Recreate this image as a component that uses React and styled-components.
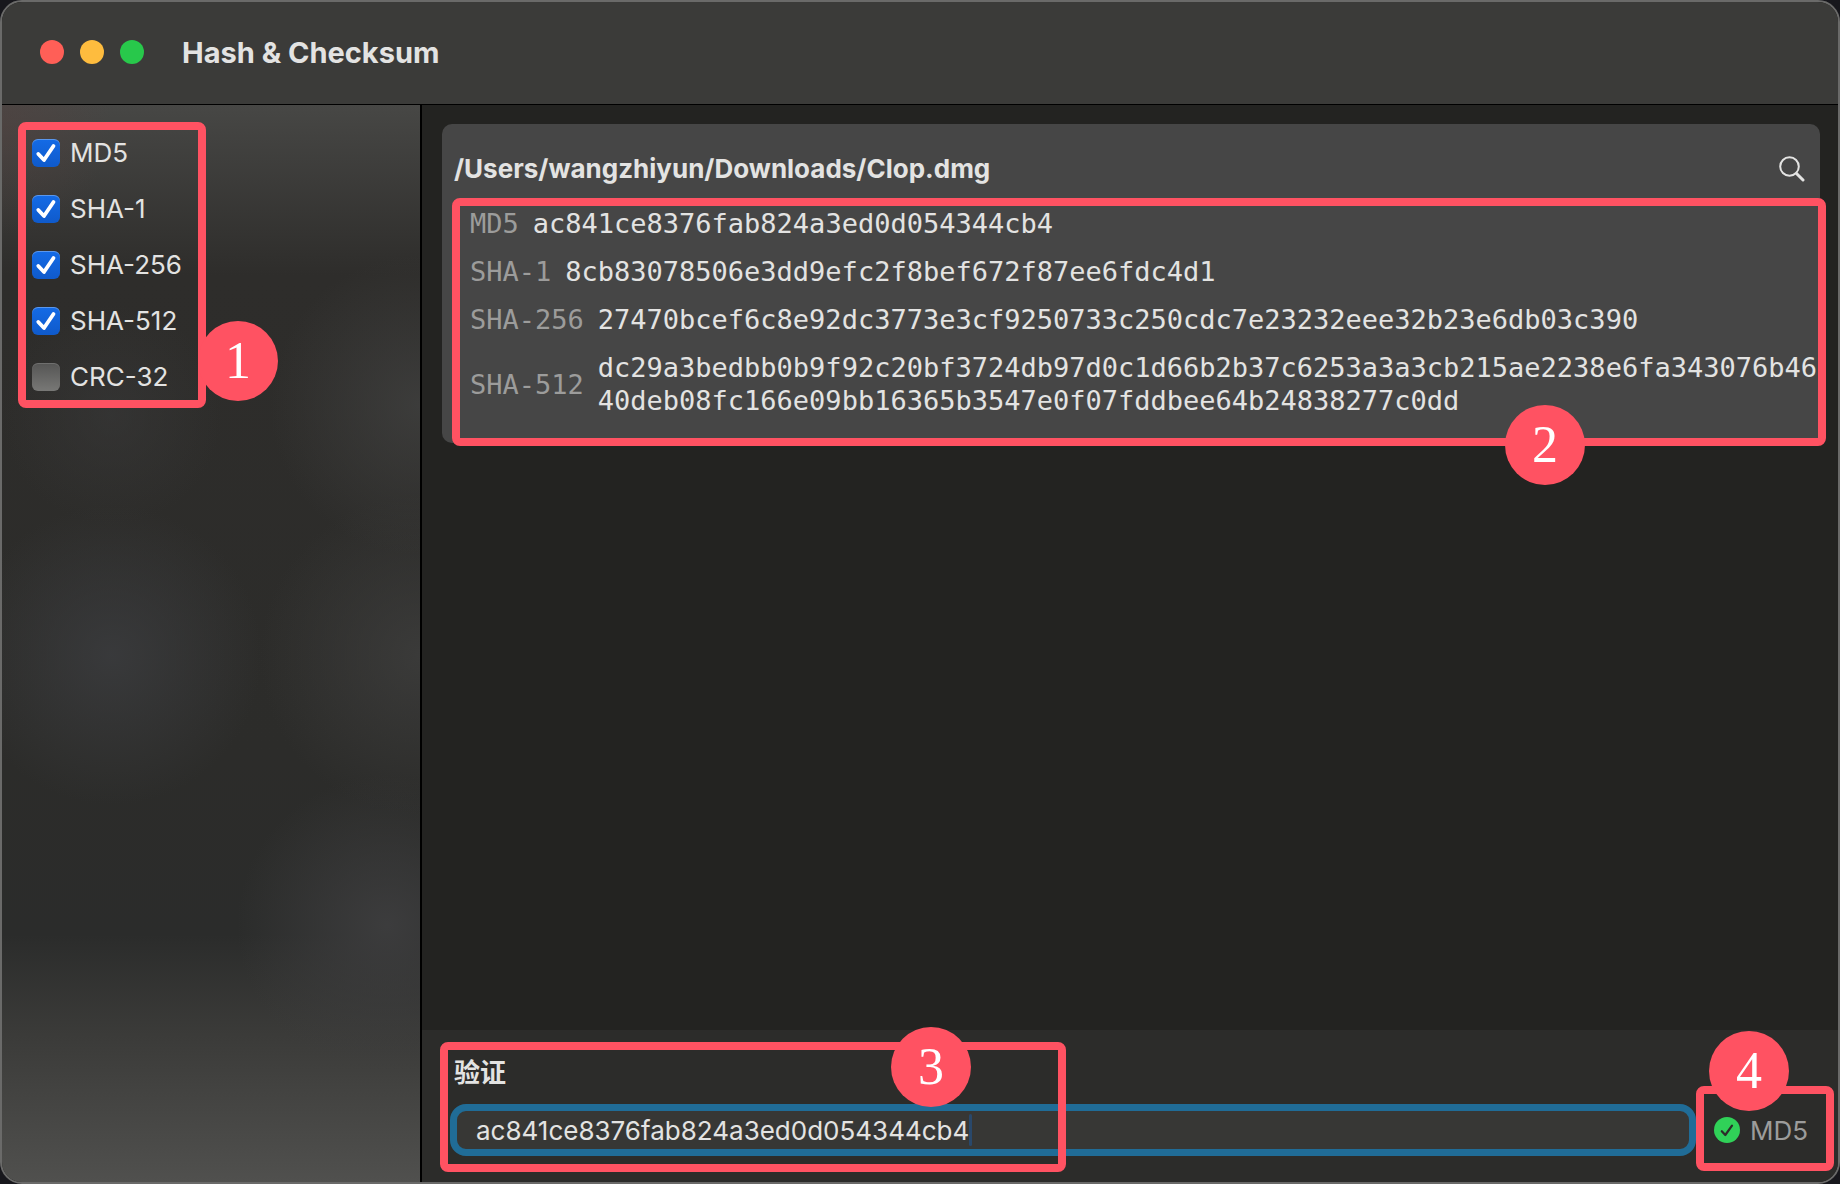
import React, { useState } from 'react'
import styled, { createGlobalStyle } from 'styled-components'

const ACCENT = '#ff5262'
const TEXT = '#e3e3e2'
const MUTED = '#9c9c9b'
const UI_FONT = "Inter, 'Noto Sans CJK SC', sans-serif"
const MONO_FONT = "'DejaVu Sans Mono', monospace"

const ALGORITHMS = [
  { name: 'MD5', checked: true },
  { name: 'SHA-1', checked: true },
  { name: 'SHA-256', checked: true },
  { name: 'SHA-512', checked: true },
  { name: 'CRC-32', checked: false },
]

const HASHES = [
  { name: 'MD5', value: 'ac841ce8376fab824a3ed0d054344cb4' },
  { name: 'SHA-1', value: '8cb83078506e3dd9efc2f8bef672f87ee6fdc4d1' },
  {
    name: 'SHA-256',
    value: '27470bcef6c8e92dc3773e3cf9250733c250cdc7e23232eee32b23e6db03c390',
  },
  {
    name: 'SHA-512',
    value:
      'dc29a3bedbb0b9f92c20bf3724db97d0c1d66b2b37c6253a3a3cb215ae2238e6fa343076b4640deb08fc166e09bb16365b3547e0f07fddbee64b24838277c0dd',
  },
]

const GlobalStyle = createGlobalStyle`
  * {
    box-sizing: border-box;
  }

  body {
    margin: 0;
    background: #17171c;
    color: ${TEXT};
    font-family: ${UI_FONT};
    font-size: 26px;
    line-height: 33px;
  }
`

const Window = styled.div`
  display: flex;
  flex-direction: column;
  min-height: 100vh;
  border: 2px solid #6a6a69;
  border-radius: 22px;
  background: #232321;
  overflow: hidden;
`

const TitleBar = styled.header`
  display: flex;
  align-items: center;
  gap: 16px;
  height: 103px;
  padding: 0 38px 2px;
  border-bottom: 1px solid #000;
  background: #3b3b39;
`

const Light = styled.button`
  width: 24px;
  height: 24px;
  padding: 0;
  border: 0;
  border-radius: 50%;
  background: ${({ $color }) => $color};
`

const Title = styled.h1`
  margin: 0 0 0 22px;
  font-size: 29px;
  font-weight: 700;
`

const Body = styled.div`
  display: flex;
  flex: 1;
`

const Sidebar = styled.aside`
  flex: none;
  width: 420px;
  padding: 31px 30px;
  border-right: 2px solid #000;
  background:
    radial-gradient(circle at 0 20px, rgba(84, 66, 64, 0.5), transparent 110px),
    radial-gradient(circle at 100% 300px, rgba(64, 64, 63, 0.8), transparent 150px),
    radial-gradient(circle at 110px 310px, rgba(56, 56, 56, 0.6), transparent 110px),
    radial-gradient(circle at 110px 550px, rgba(58, 59, 61, 0.9), transparent 150px),
    radial-gradient(circle at 100% 550px, rgba(60, 60, 59, 0.9), transparent 160px),
    radial-gradient(circle at 385px 820px, rgba(62, 62, 63, 0.9), transparent 150px),
    linear-gradient(#474745, #2e2d2b 170px, #2c2c2a 650px, #2b2c2b 830px, #3b3b39 930px, #50504e);
`

const AlgorithmList = styled.div`
  position: relative;
  display: flex;
  flex-direction: column;
  align-items: flex-start;
  gap: 23px;
`

const Algorithm = styled.label`
  display: flex;
  align-items: center;
  gap: 10px;
`

const Checkbox = styled.span`
  position: relative;
  display: flex;
  width: 28px;
  height: 28px;

  input {
    width: 28px;
    height: 28px;
    margin: 0;
    appearance: none;
    border-radius: 6px;
    background: linear-gradient(#555554, #787876);
    box-shadow: inset 0 1px 0 rgba(255, 255, 255, 0.15);
  }

  input:checked {
    background: linear-gradient(#146be6, #0f5acb);
    box-shadow: inset 0 1px 0 rgba(255, 255, 255, 0.3);
  }

  svg {
    position: absolute;
    inset: 0;
    pointer-events: none;
  }
`

const Main = styled.main`
  display: flex;
  flex: 1;
  flex-direction: column;
  min-width: 0;
`

const Results = styled.section`
  flex: 1;
  padding: 19px 18px 19px 20px;
`

const Card = styled.article`
  padding: 28px 2px 26px 12px;
  border-radius: 10px;
  background: #464646;
`

const CardHeader = styled.div`
  display: flex;
  align-items: center;
  justify-content: space-between;
  margin: 0 13px 22px 0;
`

const Path = styled.h2`
  margin: 0;
  font-size: 26px;
  font-weight: 700;
`

const IconButton = styled.button`
  display: flex;
  padding: 0;
  border: 0;
  background: none;
  color: ${TEXT};
`

const HashList = styled.dl`
  position: relative;
  display: flex;
  flex-direction: column;
  gap: 15px;
  margin: 0;
  padding-left: 16px;
  font-family: ${MONO_FONT};
  font-size: 27px;
`

const HashRow = styled.div`
  display: flex;
  align-items: center;
  gap: 14px;

  dt {
    flex: none;
    color: ${MUTED};
  }

  dd {
    min-width: 0;
    margin: 0;
    overflow-wrap: anywhere;
  }
`

const Footer = styled.footer`
  position: relative;
  padding: 26px 30px 26px 28px;
  background: #2c2c2a;
`

const FooterLabel = styled.label`
  display: block;
  margin: 0 4px 15px;
  font-weight: 700;
`

const VerifyRow = styled.div`
  display: flex;
  align-items: center;
  gap: 18px;
`

const Field = styled.div`
  display: flex;
  flex: 1;
  align-items: center;
  height: 52px;
  padding: 0 19px;
  border: 7px solid #206c97;
  border-radius: 16px;
  background: #373735;

  input {
    field-sizing: content;
    max-width: 100%;
    padding: 0;
    border: 0;
    outline: 0;
    background: none;
    color: ${TEXT};
    font: inherit;
  }
`

const Caret = styled.span`
  width: 3px;
  height: 32px;
  border-radius: 2px;
  background: #29486b;
`

const Status = styled.div`
  position: relative;
  display: flex;
  align-items: center;
  gap: 10px;
  color: ${MUTED};
`

// Annotation frame, placed over the block that it points at.
const Frame = styled.div`
  position: absolute;
  inset: ${({ $inset }) => $inset};
  width: ${({ $width }) => $width};
  border: 8px solid ${ACCENT};
  border-radius: 8px;
  pointer-events: none;
`

const Badge = styled.span`
  position: absolute;
  inset: ${({ $inset }) => $inset};
  display: flex;
  align-items: center;
  justify-content: center;
  width: 80px;
  height: 80px;
  border-radius: 50%;
  background: ${ACCENT};
  color: #fff;
  font-family: 'Liberation Serif', serif;
  font-size: 52px;
  line-height: 52px;
`

const Annotation = ({ number, inset, width = 'auto', badge }) => (
  <Frame $inset={inset} $width={width}>
    <Badge $inset={badge}>{number}</Badge>
  </Frame>
)

const SearchIcon = () => (
  <svg width="26" height="26" viewBox="0 0 26 26" fill="none" stroke="currentColor">
    <circle cx="10.5" cy="10.5" r="9.3" strokeWidth="2" />
    <path d="M17.5 17.5L24 24" strokeWidth="3" strokeLinecap="round" />
  </svg>
)

const ValidIcon = () => (
  <svg width="26" height="26" viewBox="0 0 26 26" fill="none">
    <circle cx="13" cy="13" r="13" fill="#30d158" />
    <path
      d="M7.8 14.2L11.3 18L18 8.7"
      stroke="#2c2c2a"
      strokeWidth="2.2"
      strokeLinecap="round"
      strokeLinejoin="round"
    />
  </svg>
)

const AlgorithmOption = ({ name, checked: initial }) => {
  const [checked, setChecked] = useState(initial)

  return (
    <Algorithm>
      <Checkbox>
        <input
          type="checkbox"
          checked={checked}
          onChange={e => setChecked(e.target.checked)}
        />
        {checked && (
          <svg width="28" height="28" viewBox="0 0 28 28" fill="none">
            <path
              d="M6.3 15L12 21L21.5 7"
              stroke="#fff"
              strokeWidth="3.8"
              strokeLinecap="round"
              strokeLinejoin="round"
            />
          </svg>
        )}
      </Checkbox>
      {name}
    </Algorithm>
  )
}

const App = () => {
  const [value, setValue] = useState(HASHES[0].value)
  const match = HASHES.find(hash => hash.value === value)

  return (
    <>
      <GlobalStyle />
      <Window>
        <TitleBar>
          <Light $color="#ff5f57" aria-label="Close" />
          <Light $color="#febc3e" aria-label="Minimize" />
          <Light $color="#28c84b" aria-label="Zoom" />
          <Title>Hash &amp; Checksum</Title>
        </TitleBar>
        <Body>
          <Sidebar>
            <AlgorithmList>
              {ALGORITHMS.map(item => (
                <AlgorithmOption key={item.name} {...item} />
              ))}
              <Annotation
                number={1}
                inset="-14px auto -15px -14px"
                width="188px"
                badge="auto -80px -1px auto"
              />
            </AlgorithmList>
          </Sidebar>
          <Main>
            <Results>
              <Card>
                <CardHeader>
                  <Path>/Users/wangzhiyun/Downloads/Clop.dmg</Path>
                  <IconButton aria-label="Search">
                    <SearchIcon />
                  </IconButton>
                </CardHeader>
                <HashList>
                  {HASHES.map(hash => (
                    <HashRow key={hash.name}>
                      <dt>{hash.name}</dt>
                      <dd>{hash.value}</dd>
                    </HashRow>
                  ))}
                  <Annotation
                    number={2}
                    inset="-9px -8px -29px -2px"
                    badge="auto 233px -47px auto"
                  />
                </HashList>
              </Card>
            </Results>
            <Footer>
              <FooterLabel htmlFor="verify">验证</FooterLabel>
              <VerifyRow>
                <Field>
                  <input
                    id="verify"
                    value={value}
                    spellCheck={false}
                    onChange={e => setValue(e.target.value)}
                  />
                  <Caret />
                </Field>
                <Status>
                  {match && <ValidIcon />}
                  {match && match.name}
                  <Annotation
                    number={4}
                    inset="-28px -26px -24px -18px"
                    badge="-63px 37px auto auto"
                  />
                </Status>
              </VerifyRow>
              <Annotation
                number={3}
                inset="12px auto 10px 18px"
                width="626px"
                badge="-23px 87px auto auto"
              />
            </Footer>
          </Main>
        </Body>
      </Window>
    </>
  )
}

export default App
